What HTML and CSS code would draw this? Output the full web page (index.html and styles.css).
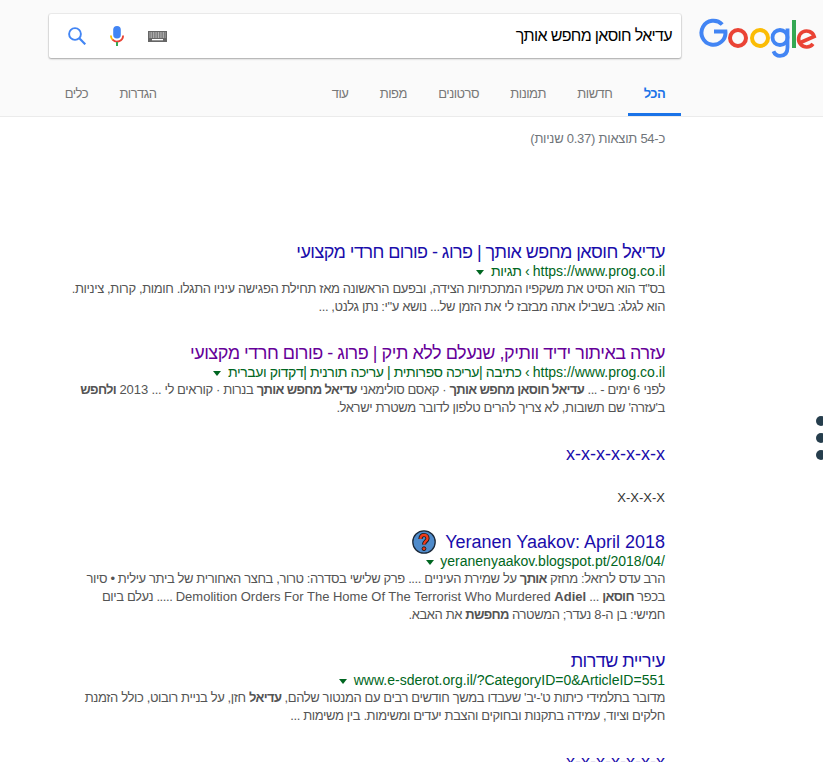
FILE: index.html
```html
<!DOCTYPE html>
<html lang="he" dir="rtl">
<head>
<meta charset="utf-8">
<title>עדיאל חוסאן מחפש אותך</title>
<link rel="stylesheet" href="styles.css">
</head>
<body>
<header class="header">
  <div class="top">
    <svg class="logo" width="120" height="42" viewBox="0 0 120 42" aria-label="Google">
      <path d="M24.200 7.500A12 12 0 1 0 27.400 14.500H16" fill="none" stroke="#4285f4" stroke-width="4"/>
      <circle cx="40" cy="21" r="8" fill="none" stroke="#ea4335" stroke-width="4"/>
      <circle cx="62" cy="21" r="8" fill="none" stroke="#fbbc05" stroke-width="4"/>
      <circle cx="82" cy="20.500" r="7.500" fill="none" stroke="#4285f4" stroke-width="3.800"/>
      <path d="M89.500 11.500v19c0 6-3.300 8.300-7.500 8.300-3.200 0-5.500-2-6.500-4.600" fill="none" stroke="#4285f4" stroke-width="3.800"/>
      <rect x="94" y="3" width="4" height="28" fill="#34a853"/>
      <path d="M102.500 25.500L116.200 19.500A8 8 0 1 0 115 26.800" fill="none" stroke="#ea4335" stroke-width="3.600"/>
    </svg>
    <div class="search">
      <span class="query">עדיאל חוסאן מחפש אותך</span>
      <div class="search-icons">
        <svg width="19" height="11" viewBox="0 0 19 11"><rect width="19" height="11" fill="#666"/><path d="M1.500 2h16M1.500 4h16M1.500 6h16" stroke="#fff" stroke-width="1" stroke-dasharray="1 .7"/><rect x="4" y="8" width="11" height="1.300" fill="#fff"/></svg>
        <svg class="mic" width="14" height="20" viewBox="0 0 14 20"><rect x="3.200" y="0" width="7.600" height="12.500" rx="3.800" fill="#4285f4"/><path d="M.9 9.500a6.100 6.100 0 0 0 1.900 4.500" fill="none" stroke="#fbbc05" stroke-width="1.800"/><path d="M2.600 13.700a6.100 6.100 0 0 0 10.500-4.200" fill="none" stroke="#ea4335" stroke-width="1.800"/><rect x="6" y="16" width="2" height="4" fill="#34a853"/></svg>
        <svg width="18" height="18" viewBox="0 0 18 18"><circle cx="7" cy="7" r="5.900" fill="none" stroke="#4285f4" stroke-width="1.900"/><path d="M11.300 11.300l6 6" stroke="#4285f4" stroke-width="2.200"/></svg>
      </div>
    </div>
  </div>
  <nav class="tabs">
    <a class="tab tab-active">הכל</a>
    <a class="tab">חדשות</a>
    <a class="tab">תמונות</a>
    <a class="tab">סרטונים</a>
    <a class="tab">מפות</a>
    <a class="tab">עוד</a>
    <div class="tab-tools">
      <a class="tab">הגדרות</a>
      <a class="tab">כלים</a>
    </div>
  </nav>
</header>

<main class="main">
  <p class="stats">כ-54 תוצאות (0.37 שניות)</p>

  <article class="result">
    <h3 class="title">עדיאל חוסאן מחפש אותך | פרוג - פורום חרדי מקצועי</h3>
    <div class="url"><bdi>https://www.prog.co.il</bdi> › תגיות <span class="caret"></span></div>
    <p class="snippet">בס"ד הוא הסיט את משקפיו המתכתיות הצידה, ובפעם הראשונה מאז תחילת הפגישה עיניו התגלו. חומות, קרות, ציניות.<br>הוא לגלג: בשבילו אתה מבזבז לי את הזמן של... נושא ע"י: נתן גלנט, ...</p>
  </article>

  <article class="result">
    <h3 class="title title-visited">עזרה באיתור ידיד וותיק, שנעלם ללא תיק | פרוג - פורום חרדי מקצועי</h3>
    <div class="url"><bdi>https://www.prog.co.il</bdi> › כתיבה |עריכה ספרותית | עריכה תורנית |דקדוק ועברית <span class="caret"></span></div>
    <p class="snippet">לפני <bdi>6</bdi> ימים - ... <b>עדיאל חוסאן מחפש אותך</b> · קאסם סולימאני <b>עדיאל מחפש אותך</b> בנרות · קוראים לי ... <bdi>2013</bdi> <b>ולחפש</b><br>ב'עזרה' שם תשובות, לא צריך להרים טלפון לדובר משטרת ישראל.</p>
  </article>

  <article class="result result-plain">
    <h3 class="title"><bdi>x-x-x-x-x-x-x</bdi></h3>
    <p class="plain">X-X-X-X</p>
  </article>

  <article class="result">
    <h3 class="title title-icon">
      <bdi>Yeranen Yaakov: April 2018</bdi>
      <svg class="help" width="24" height="24" viewBox="0 0 24 24"><circle cx="12" cy="12" r="11.200" fill="#4f8bcb" stroke="#1d2a3a" stroke-width="1.300"/><path d="M8.500 9C8.500 6 10 5 12 5C14.500 5 15.500 6.800 15.500 8.500C15.500 11 12 11.500 12 14.500" fill="none" stroke="#1a1a1a" stroke-width="4.200"/><path d="M8.500 9C8.500 6 10 5 12 5C14.500 5 15.500 6.800 15.500 8.500C15.500 11 12 11.500 12 14.500" fill="none" stroke="#ee3b1b" stroke-width="2.400"/><circle cx="12" cy="18.700" r="1.900" fill="#ee3b1b" stroke="#1a1a1a" stroke-width=".9"/></svg>
    </h3>
    <div class="url"><bdi>yeranenyaakov.blogspot.pt/2018/04/</bdi> <span class="caret"></span></div>
    <p class="snippet">הרב עדס לרזאל: מחזק <b>אותך</b> על שמירת העיניים .... פרק שלישי בסדרה: טרור, בחצר האחורית של ביתר עילית • סיור<br>בכפר <b>חוסאן</b> ... <bdi>Demolition Orders For The Home Of The Terrorist Who Murdered <b>Adiel</b></bdi> ..... נעלם ביום<br>חמישי: בן ה-<bdi>8</bdi> נעדר; המשטרה <b>מחפשת</b> את האבא.</p>
  </article>

  <article class="result">
    <h3 class="title">עיריית שדרות</h3>
    <div class="url"><bdi>www.e-sderot.org.il/?CategoryID=0&amp;ArticleID=551</bdi> <span class="caret"></span></div>
    <p class="snippet">מדובר בתלמידי כיתות ט'-יב' שעבדו במשך חודשים רבים עם המנטור שלהם, <b>עדיאל</b> חזן, על בניית רובוט, כולל הזמנת<br>חלקים וציוד, עמידה בתקנות ובחוקים והצבת יעדים ומשימות. בין משימות ...</p>
  </article>

  <article class="result">
    <h3 class="title"><bdi>x-x-x-x-x-x-x</bdi></h3>
  </article>
</main>

<div class="dots"><span class="dot"></span><span class="dot"></span><span class="dot"></span></div>
</body>
</html>
```
FILE: styles.css
```css
html, body {
  margin: 0;
  padding: 0;
  height: 762px;
  overflow: hidden;
  background: #fff;
  font-family: "Liberation Sans", Arial, sans-serif;
}

bdi,
bdi b {
  letter-spacing: 0;
}

.header {
  background: #fafafa;
  border-bottom: 1px solid #ebebeb;
  height: 116px;
}

.top {
  display: flex;
  align-items: flex-start;
  height: 73px;
}

.logo {
  flex: none;
  margin: 17px 5px 0 17px;
}

.search {
  width: 632px;
  height: 44px;
  margin-top: 14px;
  background: #fff;
  border-radius: 2px;
  box-shadow: 0 1px 2px rgba(0,0,0,.3), 0 0 0 1px rgba(0,0,0,.05);
  display: flex;
  align-items: center;
  justify-content: space-between;
  padding: 0 9px 0 19px;
  box-sizing: border-box;
}

.query {
  font-size: 16px;
  letter-spacing: -0.65px;
  color: #000;
}

.search-icons {
  display: flex;
  align-items: center;
}

.mic {
  margin: 0 24px;
}

.tabs {
  display: flex;
  height: 43px;
  padding-right: 142px;
}

.tab {
  color: #777;
  padding: 13px 15.7px 0;
  font-size: 13px;
  letter-spacing: -0.52px;
  box-sizing: border-box;
  height: 43px;
  white-space: nowrap;
}

.tab-active {
  color: #1a73e8;
  font-weight: bold;
  border-bottom: 3px solid #1a73e8;
}

.tab-tools {
  display: flex;
  margin-right: auto;
  margin-left: 49px;
}

.main {
  padding-right: 158px;
}

.stats {
  margin: 14px 0 0;
  font-size: 13px;
  letter-spacing: -0.25px;
  line-height: 16px;
  color: #70757a;
  height: 111px;
}

.result {
  margin-bottom: 27px;
  white-space: nowrap;
}

.result-plain {
  margin-bottom: 25px;
}

.title {
  margin: 0;
  font-size: 18px;
  font-weight: normal;
  letter-spacing: -0.56px;
  line-height: 20px;
  color: #1a0dab;
}

.title-visited {
  color: #609;
  letter-spacing: -0.47px;
}

.title-icon {
  display: flex;
  align-items: center;
  gap: 9px;
}

.help {
  margin: -2px 0;
}

.url {
  font-size: 14px;
  letter-spacing: -0.4px;
  line-height: 18px;
  color: #006621;
}

.caret {
  display: inline-block;
  width: 0;
  height: 0;
  border-top: 5px solid #006621;
  border-left: 4px solid transparent;
  border-right: 4px solid transparent;
  margin-right: 3px;
  vertical-align: 1px;
}

.snippet {
  margin: 0;
  font-size: 13px;
  letter-spacing: -0.39px;
  line-height: 18px;
  color: #545454;
}

.snippet b {
  letter-spacing: -0.65px;
}

.snippet bdi b {
  letter-spacing: 0;
}

.plain {
  margin: 25px 0 0;
  font-size: 13px;
  line-height: 18px;
  color: #333;
}

.dots {
  position: absolute;
  left: 816px;
  top: 416px;
  display: flex;
  flex-direction: column;
  gap: 7px;
}

.dot {
  width: 10px;
  height: 10px;
  border-radius: 50%;
  background: #263e4d;
}
```
